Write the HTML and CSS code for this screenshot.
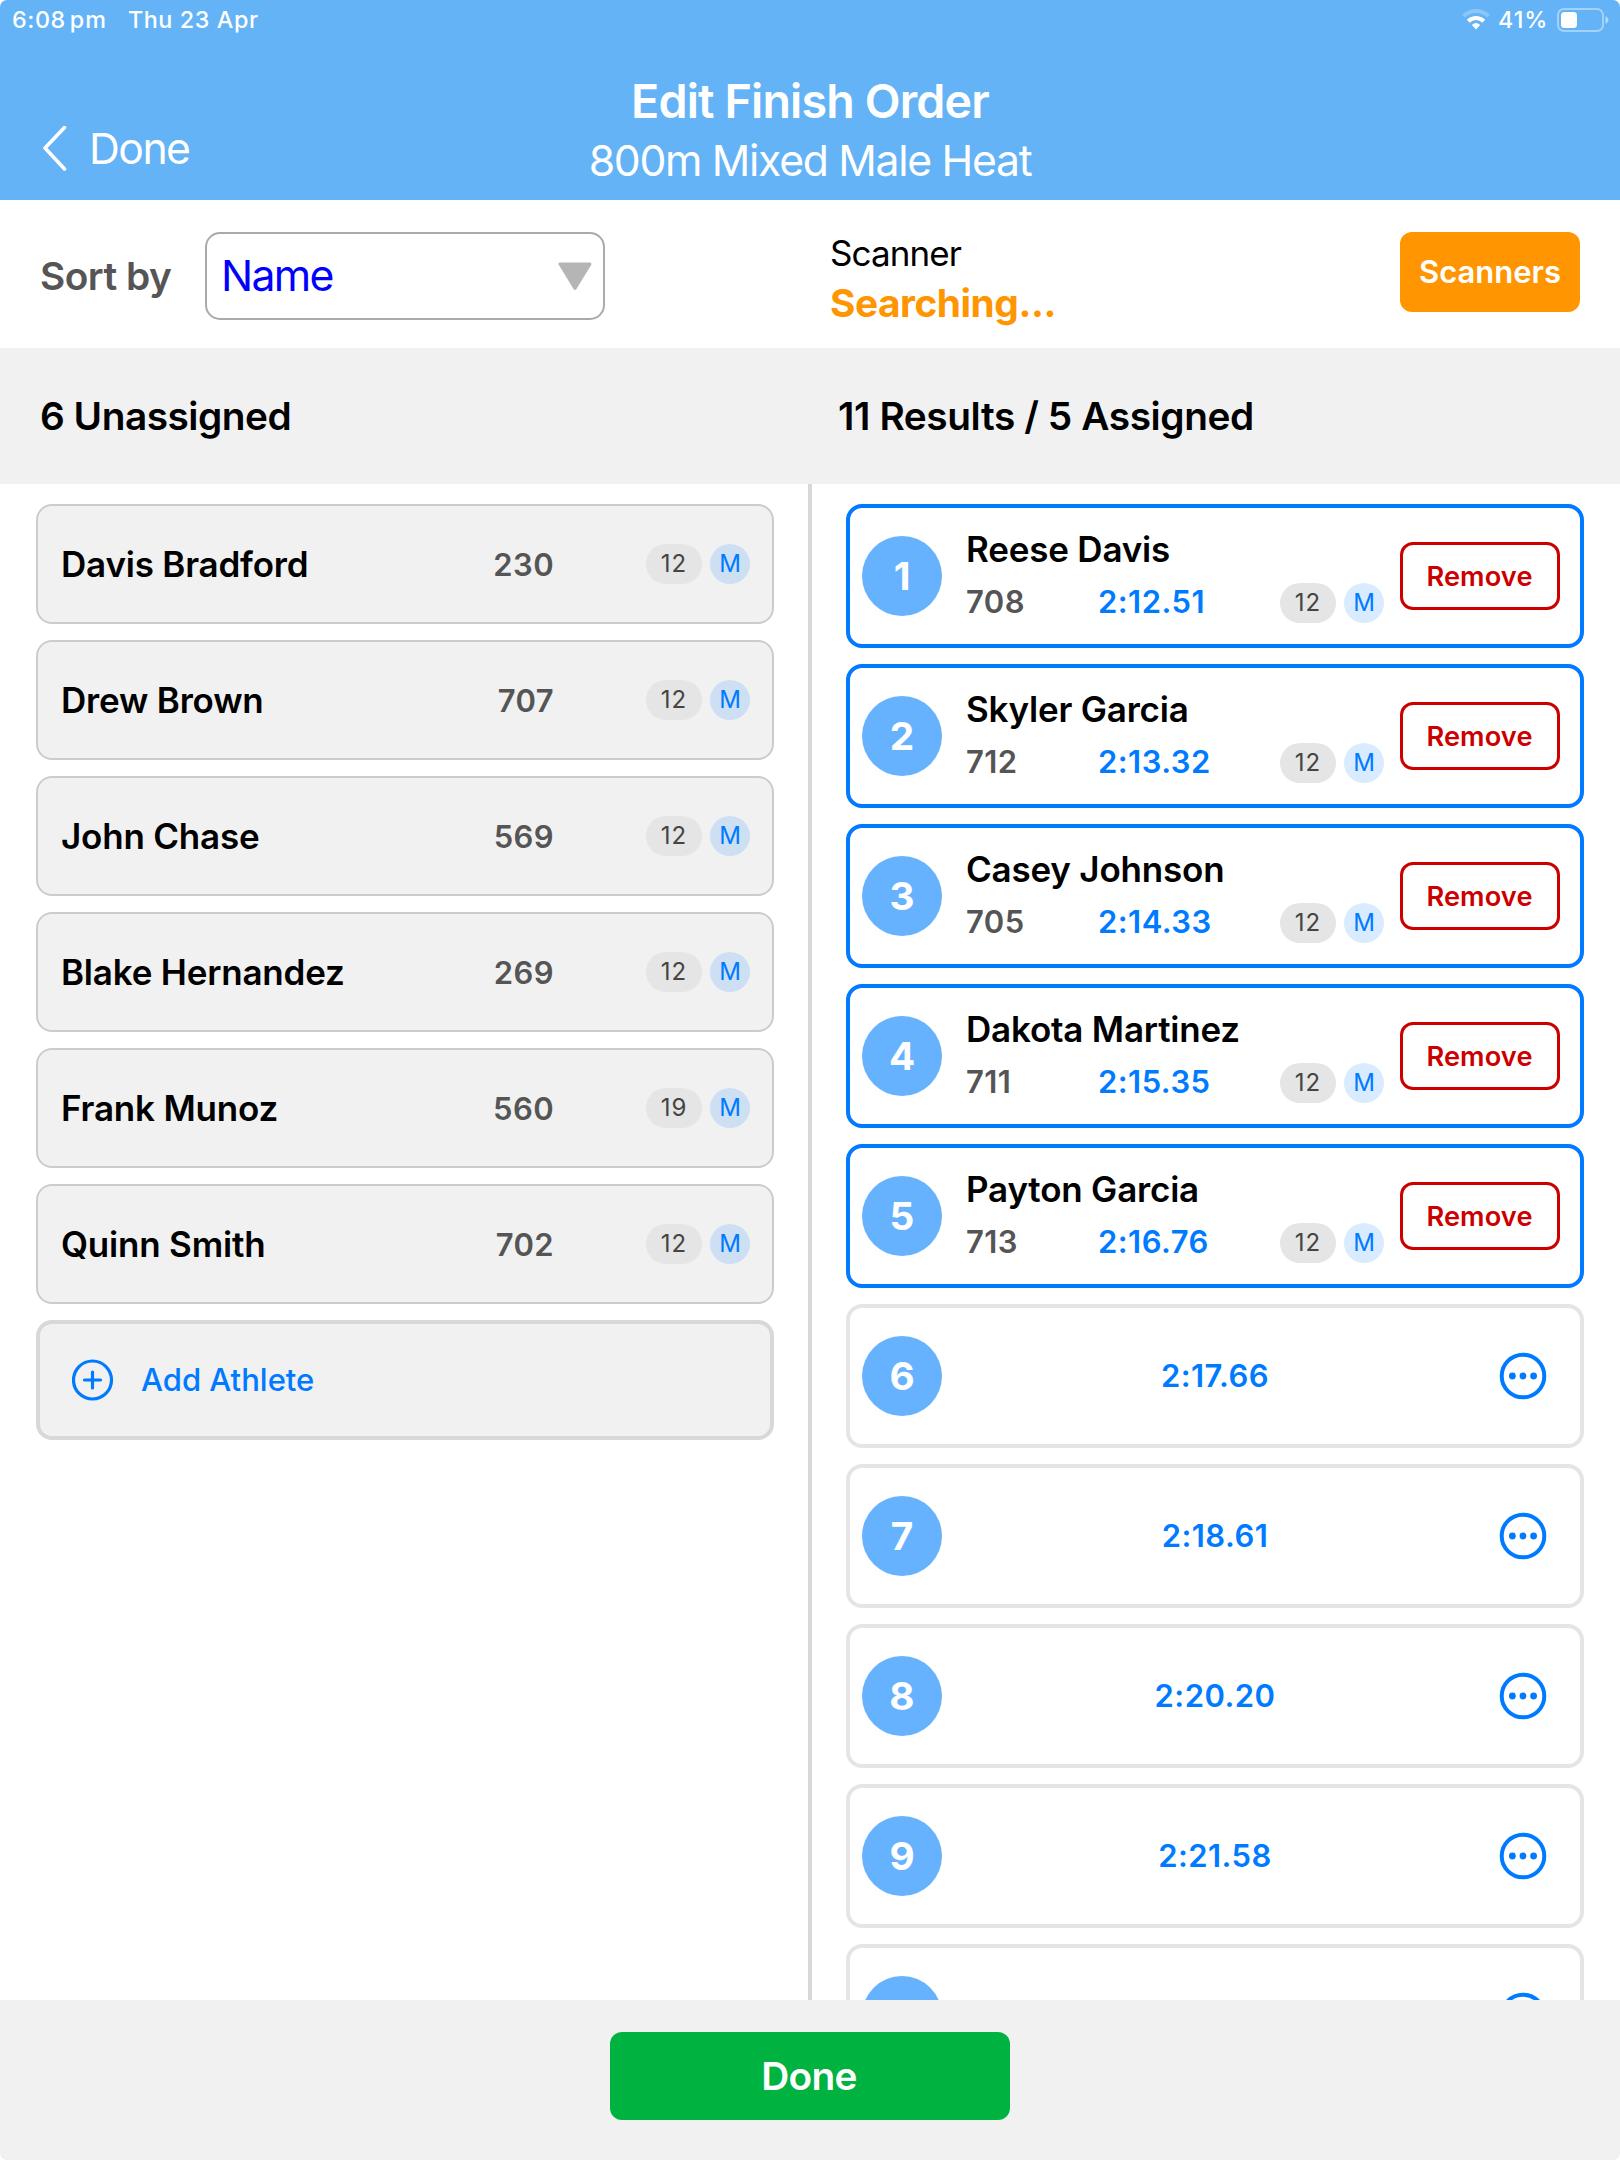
FILE: index.html
```html
<!DOCTYPE html>
<html lang="en">
<head>
  <meta charset="UTF-8">
  <meta name="viewport" content="width=device-width, initial-scale=1.0">
  <title>Edit Finish Order</title>
  <link rel="stylesheet" href="styles.css">
</head>
<body>
  <header>
    <div class="status-bar">
      <span class="clock">6:08</span>
      <span class="ampm">pm</span>
      <span class="date">Thu 23 Apr</span>
      <svg class="wifi" width="28" height="22" viewBox="0 0 28 22">
        <path d="M1.6 7.2 A17.5 17.5 0 0 1 26.4 7.2" fill="none" stroke="#fff" stroke-opacity="0.25" stroke-width="4"/>
        <path d="M6.3 12.2 A11 11 0 0 1 21.7 12.2" fill="none" stroke="#fff" stroke-width="4"/>
        <path d="M9.9 16 Q14 12 18.1 16 L14 20.4 Z" fill="#fff"/>
      </svg>
      <span class="percent">41%</span>
      <svg class="battery" width="54" height="26" viewBox="0 0 54 26">
        <rect x="1" y="2" width="45" height="22" rx="6" fill="none" stroke="#fff" stroke-opacity="0.4" stroke-width="2"/>
        <rect x="4" y="5" width="16" height="16" rx="3.5" fill="#fff"/>
        <path d="M48.5 9 Q51.5 10.5 51.5 13 Q51.5 15.5 48.5 17 Z" fill="#fff" fill-opacity="0.5"/>
      </svg>
    </div>
    <div class="nav-bar">
      <a class="back" href="#">
        <svg width="27" height="46" viewBox="0 0 27 46">
          <path d="M23.5 1.5 L4 22 L23.5 43" fill="none" stroke="#fff" stroke-width="3.6" stroke-linecap="round" stroke-linejoin="round"/>
        </svg>
        <span>Done</span>
      </a>
      <div class="titles">
        <h1>Edit Finish Order</h1>
        <p>800m Mixed Male Heat</p>
      </div>
    </div>
  </header>

  <div class="toolbar">
    <div class="sort">
      <label>Sort by</label>
      <div class="select">
        <span>Name</span>
        <svg width="34" height="29" viewBox="0 0 34 29">
          <path d="M2 2 L32 2 L17 26.5 Z" fill="#b5b5b5" stroke="#b5b5b5" stroke-width="3" stroke-linejoin="round"/>
        </svg>
      </div>
    </div>
    <div class="scanner">
      <div class="scanner-status">
        <p>Scanner</p>
        <p class="searching">Searching...</p>
      </div>
      <button class="scanners-btn">Scanners</button>
    </div>
  </div>

  <div class="headings">
    <h2>6 Unassigned</h2>
    <h2>11 Results / 5 Assigned</h2>
  </div>

  <main>
    <div class="unassigned" id="unassigned"></div>
    <div class="results" id="results"></div>
  </main>

  <footer>
    <button class="done-btn">Done</button>
  </footer>

  <script>
    const unassigned = [
      { name: 'Davis Bradford', bib: 230, age: 12 },
      { name: 'Drew Brown', bib: 707, age: 12 },
      { name: 'John Chase', bib: 569, age: 12 },
      { name: 'Blake Hernandez', bib: 269, age: 12 },
      { name: 'Frank Munoz', bib: 560, age: 19 },
      { name: 'Quinn Smith', bib: 702, age: 12 }
    ];

    const results = [
      { name: 'Reese Davis', bib: 708, age: 12, time: '2:12.51' },
      { name: 'Skyler Garcia', bib: 712, age: 12, time: '2:13.32' },
      { name: 'Casey Johnson', bib: 705, age: 12, time: '2:14.33' },
      { name: 'Dakota Martinez', bib: 711, age: 12, time: '2:15.35' },
      { name: 'Payton Garcia', bib: 713, age: 12, time: '2:16.76' },
      { time: '2:17.66' },
      { time: '2:18.61' },
      { time: '2:20.20' },
      { time: '2:21.58' },
      { time: '' }
    ];

    function tags(age) {
      return `<div class="tags"><span class="age">${age}</span><span class="gender">M</span></div>`;
    }

    function renderUnassigned() {
      const list = document.getElementById('unassigned');
      list.innerHTML = unassigned.map(athlete => `
        <div class="athlete">
          <span class="name">${athlete.name}</span>
          <span class="bib">${athlete.bib}</span>
          ${tags(athlete.age)}
        </div>
      `).join('') + `
        <div class="athlete add">
          <svg width="42" height="42" viewBox="0 0 42 42" fill="none" stroke="#007aff" stroke-width="3.2" stroke-linecap="round">
            <circle cx="20.5" cy="21" r="19"/>
            <path d="M20.5 13 V29 M12.5 21 H28.5"/>
          </svg>
          <span>Add Athlete</span>
        </div>
      `;
    }

    function renderResults() {
      const list = document.getElementById('results');
      list.innerHTML = results.map((result, i) => result.name ? `
        <div class="result assigned">
          <span class="place">${i + 1}</span>
          <div class="info">
            <div class="name">${result.name}</div>
            <div class="details">
              <span class="bib">${result.bib}</span>
              <span class="time">${result.time}</span>
              ${tags(result.age)}
            </div>
          </div>
          <button class="remove-btn">Remove</button>
        </div>
      ` : `
        <div class="result open">
          <span class="place">${result.time ? i + 1 : ''}</span>
          <span class="time">${result.time}</span>
          <svg class="more" width="48" height="48" viewBox="0 0 48 48">
            <circle cx="24" cy="24" r="21.3" fill="none" stroke="#007aff" stroke-width="4"/>
            <circle cx="13.4" cy="24" r="3.4" fill="#007aff"/>
            <circle cx="24" cy="24" r="3.4" fill="#007aff"/>
            <circle cx="34.6" cy="24" r="3.4" fill="#007aff"/>
          </svg>
        </div>
      `).join('');
    }

    renderUnassigned();
    renderResults();
  </script>
</body>
</html>
```
FILE: styles.css
```css
* {
  box-sizing: border-box;
}

html {
  background-color: #fff;
}

body {
  font-family: Inter, "Liberation Sans", sans-serif;
  margin: 0;
  height: 2160px;
  display: flex;
  flex-direction: column;
  overflow: hidden;
  background-color: #fff;
  color: #000;
}

h1, h2, p {
  margin: 0;
}

button {
  font-family: inherit;
  padding: 0;
  border: none;
  cursor: pointer;
}

/* Header */
header {
  height: 200px;
  background-color: #64b3f6;
  color: #fff;
  border-radius: 7px 7px 0 0;
}

.status-bar {
  display: flex;
  align-items: center;
  height: 39px;
  padding: 0 9px 0 12px;
  font-size: 23.3px;
  font-weight: 500;
  letter-spacing: 0.6px;
}

.ampm {
  margin-left: 4px;
  letter-spacing: 1px;
}

.date {
  margin-left: 21px;
}

.wifi {
  margin-left: auto;
}

.percent {
  width: 67px;
  padding-left: 8px;
  letter-spacing: 1px;
}

.nav-bar {
  position: relative;
  padding-top: 32px;
}

.back {
  position: absolute;
  left: 41px;
  top: 80px;
  display: flex;
  align-items: center;
  color: #fff;
  text-decoration: none;
  font-size: 42.7px;
  line-height: 60px;
  letter-spacing: -1.5px;
}

.back span {
  margin-left: 21px;
}

.titles {
  text-align: center;
  line-height: 60px;
}

.titles h1 {
  font-size: 46.6px;
  font-weight: 600;
  line-height: 60px;
  letter-spacing: -0.85px;
}

.titles p {
  font-size: 42.7px;
  letter-spacing: -1.3px;
}

/* Sort and scanner bar */
.toolbar {
  display: grid;
  grid-template-columns: 1fr 1fr;
  height: 148px;
}

.sort {
  display: flex;
  align-items: flex-start;
  padding: 32px 0 0 40px;
  line-height: 88px;
}

.sort label {
  width: 165px;
  font-size: 38.8px;
  font-weight: 600;
  letter-spacing: -0.5px;
  color: #555;
}

.select {
  display: flex;
  align-items: center;
  justify-content: space-between;
  width: 400px;
  height: 88px;
  padding: 0 11px 0 14px;
  border: 2px solid #aaa;
  border-radius: 15px;
  font-size: 42.7px;
  letter-spacing: -1.7px;
  color: #00f;
}

.scanner {
  display: flex;
  justify-content: space-between;
  align-items: flex-start;
  padding: 28px 40px 0 20px;
}

.scanner-status {
  font-size: 35px;
  letter-spacing: -0.9px;
  line-height: 50px;
}

.scanner-status .searching {
  font-size: 38.8px;
  font-weight: 700;
  letter-spacing: -0.45px;
  color: #ff9500;
}

.scanners-btn {
  width: 180px;
  height: 80px;
  margin-top: 4px;
  padding-bottom: 2px;
  border-radius: 12px;
  background-color: #ff9500;
  color: #fff;
  font-size: 31px;
  font-weight: 600;
}

/* Column headings */
.headings {
  display: grid;
  grid-template-columns: 1fr 1fr;
  height: 136px;
  background-color: #f1f1f1;
}

.headings h2 {
  padding-left: 40px;
  font-size: 38.8px;
  font-weight: 600;
  line-height: 136px;
  letter-spacing: -0.5px;
}

.headings h2 + h2 {
  padding-left: 28px;
  letter-spacing: -0.4px;
}

/* Lists */
main {
  display: flex;
  height: 1516px;
  overflow: hidden;
}

.unassigned {
  display: flex;
  flex-direction: column;
  gap: 16px;
  width: 812px;
  padding: 20px 34px 0 36px;
  border-right: 4px solid #d8d8d8;
}

.athlete {
  display: flex;
  align-items: center;
  height: 120px;
  padding: 0 22px 0 23px;
  border: 2px solid #ccc;
  border-radius: 16px;
  background-color: #f1f1f1;
}

.athlete .name {
  line-height: 42px;
  margin-bottom: 1px;
}

.name {
  font-size: 35px;
  font-weight: 600;
  letter-spacing: -0.2px;
}

.bib {
  font-size: 31px;
  font-weight: 600;
  letter-spacing: 0.4px;
  color: #555;
}

.athlete .bib {
  margin-left: auto;
  margin-right: 92px;
}

.tags {
  display: flex;
  gap: 8px;
  font-size: 24px;
  font-weight: 400;
  line-height: 40px;
  text-align: center;
}

.age {
  width: 56px;
  border-radius: 20px;
  background-color: #e5e5e5;
  color: #444;
  letter-spacing: 1px;
}

.gender {
  width: 40px;
  border-radius: 50%;
  background-color: rgba(0, 122, 255, 0.15);
  color: #007aff;
}

.athlete.add {
  gap: 27px;
  padding: 0 32px;
  border: 4px solid #d8d8d8;
  color: #007aff;
  font-size: 31px;
  font-weight: 500;
}

.athlete.add span {
  margin-bottom: 1px;
}

.results {
  display: flex;
  flex-direction: column;
  gap: 16px;
  flex: 1;
  padding: 20px 36px 0 34px;
}

.result {
  display: flex;
  align-items: center;
  flex-shrink: 0;
  height: 144px;
  padding: 0 12px;
  border: 4px solid #e5e5e5;
  border-radius: 16px;
}

.result.assigned {
  padding-right: 20px;
  border-color: #007aff;
}

.place {
  width: 80px;
  height: 80px;
  border-radius: 50%;
  background-color: #66b2ff;
  color: #fff;
  font-size: 38.8px;
  font-weight: 700;
  line-height: 80px;
  text-align: center;
}

.info {
  flex: 1;
  padding: 0 16px 4px 24px;
}

.info .name {
  line-height: 48px;
}

.details {
  display: flex;
  margin-top: 10px;
  line-height: 38px;
}

.details .bib {
  width: 132px;
}

.details .tags {
  margin-left: auto;
}

.time {
  font-size: 31px;
  font-weight: 600;
  letter-spacing: 0.45px;
  color: #007aff;
}

.remove-btn {
  width: 160px;
  height: 68px;
  padding-right: 1px;
  border: 3px solid #c00;
  border-radius: 13px;
  background-color: #fff;
  color: #c00;
  font-size: 27.2px;
  font-weight: 600;
  letter-spacing: 0.1px;
}

/* Rows without an athlete yet */
.result.open {
  display: grid;
  grid-template-columns: 1fr auto 1fr;
}

.open .time {
  margin-bottom: 1px;
}

.more {
  justify-self: end;
  margin-right: 21px;
}

/* Footer */
footer {
  height: 160px;
  padding-top: 32px;
  background-color: #f1f1f1;
  border-radius: 0 0 7px 7px;
  text-align: center;
}

.done-btn {
  width: 400px;
  height: 88px;
  padding: 0 2px 2px 0;
  border-radius: 12px;
  background-color: #00b341;
  color: #fff;
  font-size: 38.8px;
  font-weight: 600;
  letter-spacing: -0.7px;
}
```
